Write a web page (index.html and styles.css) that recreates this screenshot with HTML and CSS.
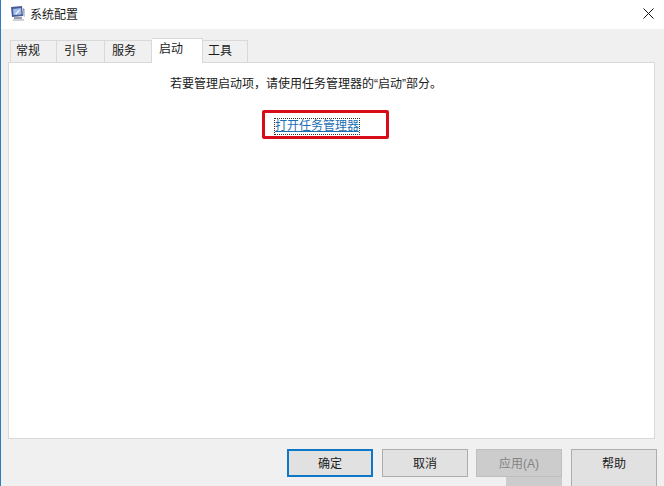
FILE: index.html
```html
<!DOCTYPE html>
<html lang="zh-CN">
<head>
    <meta charset="UTF-8">
    <title>系统配置</title>
    <link rel="stylesheet" href="styles.css">
</head>
<body>
    <div class="window">
        <!-- Title bar -->
        <div class="titlebar">
            <svg class="app-icon" width="15" height="15" viewBox="0 0 15 15">
                <path d="M1 1 L12 0 L13 10 L2 11 Z" fill="#4a5a94"/>
                <path d="M3 3 L11 2 L11.5 8.5 L3.5 9 Z" fill="#9dbdea"/>
                <path d="M5 8 L9 3.5 L10 4.5 L6.5 8.5 Z" fill="#eaf2fc"/>
                <path d="M13 2 L14.5 3 L14.5 11 L13.5 10 Z" fill="#8d93ad"/>
                <rect x="4" y="11" width="8" height="2" fill="#9a9dab"/>
                <rect x="3" y="13" width="11" height="2" fill="#cfd1d6"/>
            </svg>
            <span class="title">系统配置</span>
            <svg class="close" width="11" height="11" viewBox="0 0 11 11">
                <path d="M0.5 0.5 L10.5 10.5 M10.5 0.5 L0.5 10.5" stroke="#111" stroke-width="1" fill="none"/>
            </svg>
        </div>

        <div class="content">
            <!-- Tabs -->
            <div class="tabs">
                <div class="tab tab-first">常规</div>
                <div class="tab tab-second">引导</div>
                <div class="tab">服务</div>
                <div class="tab tab-active">启动</div>
                <div class="tab tab-last">工具</div>
            </div>

            <!-- Startup panel -->
            <div class="panel">
                <p class="hint">若要管理启动项，请使用任务管理器的“启动”部分。</p>
                <div class="link-box">
                    <a class="link" href="#">打开任务管理器</a>
                </div>
            </div>

            <!-- Buttons -->
            <div class="actions">
                <button class="btn btn-default">确定</button>
                <button class="btn">取消</button>
                <button class="btn btn-disabled">应用(A)</button>
                <button class="btn btn-help">帮助</button>
            </div>
        </div>
    </div>
</body>
</html>
```

FILE: styles.css
```css
html, body {
    margin: 0;
    padding: 0;
    height: 486px;
    overflow: hidden;
}
body {
    font-family: "Liberation Sans", "Noto Sans CJK SC", sans-serif;
    font-size: 12px;
    color: #1a1a1a;
}
.window {
    height: 486px;
    border-left: 1px solid #2b7cc0;
    display: flex;
    flex-direction: column;
    background-color: #f0f0f0;
}
.titlebar {
    height: 29px;
    background-color: #fff;
    display: flex;
    align-items: center;
    padding-left: 9px;
    padding-right: 10px;
    flex-shrink: 0;
}
.app-icon {
    margin-right: 5px;
    margin-top: -3px;
}
.title {
    margin-top: -3px;
}
.close {
    margin-left: auto;
    margin-top: -3px;
}
.content {
    flex: 1;
    padding: 9px 9px 0 7px;
    display: flex;
    flex-direction: column;
}
.tabs {
    display: flex;
    align-items: flex-end;
    height: 25px;
    padding-left: 2px;
    position: relative;
    z-index: 1;
    margin-bottom: -1px;
}
.tab {
    width: 47px;
    height: 23px;
    box-sizing: border-box;
    border: 1px solid #d9d9d9;
    border-left: none;
    padding-left: 7px;
    line-height: 21px;
}
.tab-first {
    border-left: 1px solid #d9d9d9;
    padding-left: 5px;
}
.tab-second {
    width: 48px;
}
.tab-active {
    width: 51px;
    height: 25px;
    background-color: #fff;
    border-bottom: none;
}
.tab-last {
    width: 45px;
    padding-left: 5px;
}
.panel {
    height: 377px;
    box-sizing: border-box;
    background-color: #fff;
    border: 1px solid #d9d9d9;
    padding-left: 161px;
}
.hint {
    margin: 12px 0 0;
    line-height: 18px;
}
.link-box {
    margin-top: 17px;
    margin-left: 92px;
    width: 127px;
    height: 29px;
    box-sizing: border-box;
    border: 3px solid #d80c18;
    border-radius: 2px;
    padding-left: 10px;
    padding-top: 3px;
    display: flex;
    align-items: center;
}
.link {
    color: #1a6fb5;
    text-decoration: underline;
    outline: 1px dotted #333;
    line-height: 15px;
}
.actions {
    display: flex;
    margin-top: 10px;
    margin-right: -9px;
    padding-left: 279px;
    gap: 9px;
}
.btn {
    width: 86px;
    height: 28px;
    flex-shrink: 0;
    padding: 0 0 2px;
    background-color: #e1e1e1;
    border: 1px solid #adadad;
    font-family: inherit;
    font-size: 12px;
    color: #1a1a1a;
}
.btn-default {
    border: 2px solid #0f78c6;
}
.btn-disabled {
    position: relative;
    margin-left: -1px;
    background-color: #cccccc;
    border-color: #bfbfbf;
    color: #838383;
}
/* grey smudge left under the button in the screenshot */
.btn-disabled::after {
    content: '';
    position: absolute;
    right: -1px;
    top: 27px;
    width: 56px;
    height: 10px;
    background-color: #cccccc;
}
.btn-help {
    height: 40px;
    padding-bottom: 14px;
    border-bottom: none;
}
```
